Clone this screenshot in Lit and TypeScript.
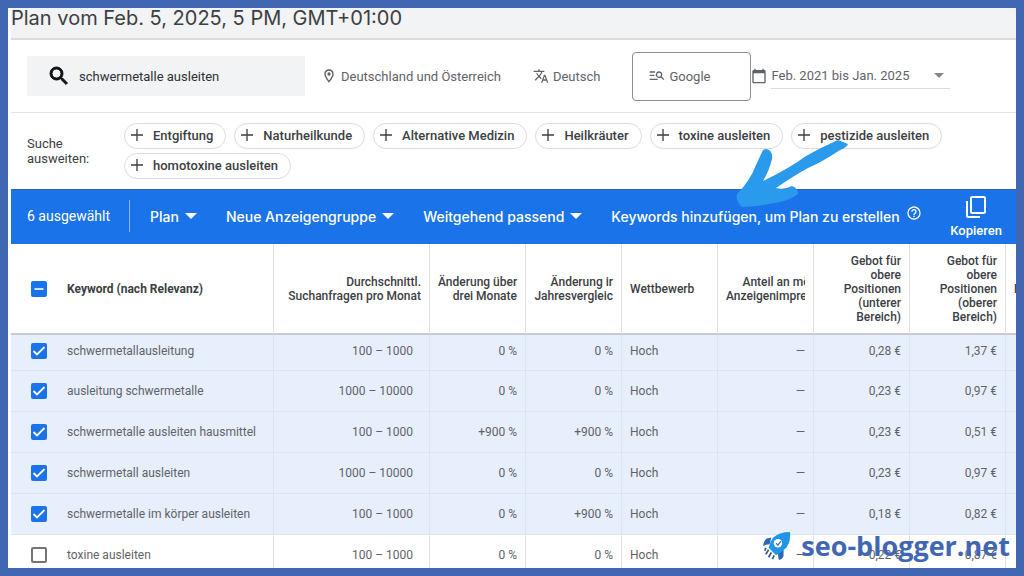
import { LitElement, html, css } from "lit";
import { customElement, state } from "lit/decorators.js";

interface Row {
  keyword: string;
  volume: string;
  quarter: string;
  year: string;
  low: string;
  high: string;
  checked: boolean;
}

const icon = (d: string) =>
  html`<svg class="icon" viewBox="0 0 24 24" aria-hidden="true"><path d=${d}></path></svg>`;

const PATHS = {
  search:
    "M15.5 14h-.79l-.28-.27A6.47 6.47 0 0 0 16 9.5 6.5 6.5 0 1 0 9.5 16c1.61 0 3.09-.59 4.23-1.57l.27.28v.79l5 4.99L20.49 19l-4.99-5zm-6 0C7.01 14 5 11.99 5 9.5S7.01 5 9.5 5 14 7.01 14 9.5 11.99 14 9.5 14z",
  place:
    "M12 2C8.13 2 5 5.13 5 9c0 5.25 7 13 7 13s7-7.75 7-13c0-3.87-3.13-7-7-7zM7 9c0-2.76 2.24-5 5-5s5 2.24 5 5c0 2.88-2.88 7.19-5 9.88C9.92 16.21 7 11.85 7 9zM12 6.5a2.5 2.5 0 1 0 0 5 2.5 2.5 0 0 0 0-5z",
  translate:
    "M12.87 15.07l-2.54-2.51.03-.03A17.52 17.52 0 0 0 14.07 6H17V4h-7V2H8v2H1v1.99h11.17C11.5 7.92 10.44 9.75 9 11.35 8.07 10.32 7.3 9.19 6.69 8h-2c.73 1.63 1.73 3.17 2.98 4.56l-5.09 5.02L4 19l5-5 3.11 3.11.76-2.04zM18.5 10h-2L12 22h2l1.12-3h4.75L21 22h2l-4.5-12zm-2.62 7l1.62-4.33L19.12 17h-3.24z",
  network:
    "M1 5h8v2H1V5zm0 5h7v2H1v-2zm0 6h12v2H1v-2zM15 5a5 5 0 1 0 2.7 9.2L21.6 18.1 23 16.700l-3.9-3.9A5 5 0 0 0 15 5zm0 2a3 3 0 1 1 0 6 3 3 0 0 1 0-6z",
  calendar:
    "M20 3h-1V1h-2v2H7V1H5v2H4c-1.1 0-2 .9-2 2v16c0 1.1.9 2 2 2h16c1.1 0 2-.9 2-2V5c0-1.1-.9-2-2-2zm0 18H4V8h16v13z",
  plus: "M21 13h-8v8h-2v-8H3v-2h8V3h2v8h8z",
  help:
    "M11 18h2v-2h-2v2zm1-16a10 10 0 1 0 0 20 10 10 0 0 0 0-20zm0 18c-4.41 0-8-3.59-8-8s3.59-8 8-8 8 3.59 8 8-3.59 8-8 8zm0-14a4 4 0 0 0-4 4h2c0-1.1.9-2 2-2s2 .9 2 2c0 2-3 1.75-3 5h2c0-2.25 3-2.5 3-5a4 4 0 0 0-4-4z",
  copy:
    "M16 21H4V6H2v15c0 1.1.9 2 2 2h12v-2zM20 1H8c-1.1 0-2 .9-2 2v14c0 1.1.9 2 2 2h12c1.1 0 2-.9 2-2V3c0-1.1-.9-2-2-2zm0 16H8V3h12v14z",
};

@customElement("app-root")
export class AppRoot extends LitElement {
  static styles = css`
    :host {
      display: block;
      font-family: Roboto, "Liberation Sans", sans-serif;
      font-size: 13px;
      color: #3c4043;
      position: relative;
    }
    * {
      box-sizing: border-box;
    }
    .frame {
      height: 100vh;
      border: 8px solid #4267b2;
      background: #fff;
      padding-left: 3px;
      overflow: hidden;
    }
    button {
      font: inherit;
      color: inherit;
      background: none;
      border: 0;
      padding: 0;
      display: inline-flex;
      align-items: center;
      white-space: nowrap;
      cursor: pointer;
    }
    .icon {
      width: 16px;
      height: 16px;
      fill: currentColor;
      flex: none;
    }
    .title {
      height: 32px;
      background: #f1f3f4;
      border-bottom: 2px solid #dadce0;
    }
    h1 {
      margin: 0;
      font: 400 20px/20px Inter, sans-serif;
      white-space: nowrap;
    }
    .filters {
      height: 73px;
      display: flex;
      align-items: center;
      border-bottom: 1px solid #e3e5e8;
      padding: 0 16px;
      color: #5f6368;
    }
    .search {
      display: flex;
      align-items: center;
      width: 278px;
      height: 40px;
      padding-left: 20px;
      gap: 8px;
      background: #f1f3f4;
      color: #111;
    }
    .search .icon {
      width: 24px;
      height: 24px;
      stroke: currentColor;
    }
    .search input {
      flex: 1;
      min-width: 0;
      border: 0;
      background: none;
      padding: 0;
      font: inherit;
      color: #303134;
      outline: none;
    }
    .filters button {
      gap: 4px;
    }
    .place {
      margin-left: 16px;
    }
    .lang {
      margin-left: 32px;
    }
    .filters .net {
      width: 119px;
      height: 49px;
      margin-left: 32px;
      padding-left: 16px;
      border: 1px solid #8a8d91;
      border-radius: 4px;
    }
    .range {
      display: flex;
      align-items: center;
      justify-content: space-between;
      width: 179px;
      height: 26px;
      border-bottom: 1px solid #dadce0;
      padding-right: 6px;
    }
    .caret {
      border: 6px solid transparent;
      border-top-color: currentColor;
      border-bottom: 0;
    }
    .range .caret {
      border-width: 5px;
      border-bottom: 0;
      color: #85888c;
    }
    .expand {
      min-height: 76px;
      display: flex;
      padding: 10px 16px;
      gap: 16px;
    }
    .label {
      width: 81px;
      padding-top: 13px;
      line-height: 15px;
    }
    .chips {
      flex: 1;
      display: flex;
      flex-wrap: wrap;
      align-content: flex-start;
      gap: 4px 8px;
    }
    .chips button {
      height: 26px;
      border: 1px solid #dadce0;
      border-radius: 13px;
      padding: 0 12px 2px 4px;
      gap: 8px;
      font-weight: 500;
    }
    .bar {
      height: 55px;
      display: flex;
      align-items: center;
      background: #1a73e8;
      border-top: 1px solid #3461a8;
      color: #fff;
      font-size: 14px;
      padding: 0 14px 2px 16px;
      white-space: nowrap;
    }
    .count {
      height: 32px;
      line-height: 32px;
      padding-right: 19px;
      margin-right: 20px;
      border-right: 1px solid #8ab8f3;
    }
    .bar button {
      gap: 6px;
      margin-right: 29px;
      font-family: Inter, sans-serif;
      font-weight: 500;
    }
    .bar .add {
      margin-right: 6px;
    }
    .bar .help {
      margin: 0 auto 6px 0;
    }
    .bar .copy {
      flex-direction: column;
      gap: 4px;
      margin: 0;
      font-family: inherit;
      font-size: 13px;
      line-height: 15px;
    }
    .copy .icon {
      width: 24px;
      height: 24px;
    }
    table {
      width: 100%;
      table-layout: fixed;
      border-collapse: separate;
      border-spacing: 0;
      color: #5f6368;
      font-size: 12px;
    }
    .c-check {
      width: 56px;
    }
    .c-vol {
      width: 156px;
    }
    .c-num {
      width: 96px;
    }
    .c-more {
      width: 10px;
    }
    th,
    td {
      padding: 0 8px;
      height: 41px;
      text-align: right;
      border-right: 1px solid #dfe3ea;
      border-bottom: 1px solid #dfe3ea;
      white-space: nowrap;
      overflow: hidden;
    }
    th {
      height: 91px;
      font-weight: 500;
      line-height: 14px;
      color: #3c4043;
      border-bottom: 2px solid #c8cacd;
    }
    tbody tr:first-child td {
      height: 36px;
      padding-bottom: 4px;
    }
    th.left,
    td.left {
      text-align: left;
    }
    th.check,
    td.check {
      padding: 0 0 0 20px;
      border-right: 0;
    }
    th.kw,
    td.kw {
      text-align: left;
      padding-left: 0;
    }
    th.kw {
      font-weight: 700;
    }
    td.vol {
      padding-right: 16px;
    }
    tr.on td {
      background: #e8effc;
    }
    td.edge,
    th.edge {
      border-right: 0;
      padding-right: 0;
    }
    .cut {
      overflow: hidden;
    }
    .over {
      display: block;
      margin-right: -5px;
    }
    input[type="checkbox"] {
      appearance: none;
      display: block;
      width: 16px;
      height: 16px;
      margin: 0;
      border: 2px solid #757575;
      border-radius: 2px;
      background: #fff center / 16px 16px no-repeat;
    }
    input[type="checkbox"]:checked,
    input[type="checkbox"]:indeterminate {
      border: 0;
      background-color: #1a73e8;
    }
    input[type="checkbox"]:checked {
      background-image: url("data:image/svg+xml,%3Csvg xmlns='http://www.w3.org/2000/svg' viewBox='0 0 16 16'%3E%3Cpath d='M2.5 8l3.5 3.5L13.5 4' fill='none' stroke='white' stroke-width='1.8'/%3E%3C/svg%3E");
    }
    input[type="checkbox"]:indeterminate {
      background-image: url("data:image/svg+xml,%3Csvg xmlns='http://www.w3.org/2000/svg' viewBox='0 0 16 16'%3E%3Cpath d='M3.5 8h9' stroke='white' stroke-width='1.6'/%3E%3C/svg%3E");
    }
    .arrow {
      position: absolute;
      left: 735px;
      top: 138px;
      width: 114px;
      height: 70px;
      pointer-events: none;
    }
    .brand {
      position: absolute;
      right: 14px;
      bottom: 10px;
      display: flex;
      align-items: center;
      gap: 10px;
      font: 700 27px/40px "Open Sans", sans-serif;
      color: #4267b2;
    }
    .brand svg {
      width: 28px;
      height: 30px;
    }
  `;

  @state() private rows: Row[] = [
    { keyword: "schwermetallausleitung", volume: "100 – 1000", quarter: "0 %", year: "0 %", low: "0,28 €", high: "1,37 €", checked: true },
    { keyword: "ausleitung schwermetalle", volume: "1000 – 10000", quarter: "0 %", year: "0 %", low: "0,23 €", high: "0,97 €", checked: true },
    { keyword: "schwermetalle ausleiten hausmittel", volume: "100 – 1000", quarter: "+900 %", year: "+900 %", low: "0,23 €", high: "0,51 €", checked: true },
    { keyword: "schwermetall ausleiten", volume: "1000 – 10000", quarter: "0 %", year: "0 %", low: "0,23 €", high: "0,97 €", checked: true },
    { keyword: "schwermetalle im körper ausleiten", volume: "100 – 1000", quarter: "0 %", year: "+900 %", low: "0,18 €", high: "0,82 €", checked: true },
    { keyword: "toxine ausleiten", volume: "100 – 1000", quarter: "0 %", year: "0 %", low: "0,22 €", high: "0,87 €", checked: false },
  ];

  private suggestions = [
    "Entgiftung",
    "Naturheilkunde",
    "Alternative Medizin",
    "Heilkräuter",
    "toxine ausleiten",
    "pestizide ausleiten",
    "homotoxine ausleiten",
  ];

  private toggle(index: number) {
    this.rows = this.rows.map((r, i) => (i === index ? { ...r, checked: !r.checked } : r));
  }

  render() {
    return html`
      <main class="frame">
        <header class="title"><h1>Plan vom Feb. 5, 2025, 5 PM, GMT+01:00</h1></header>
        <section class="filters">
          <label class="search">
            ${icon(PATHS.search)}
            <input type="text" aria-label="Keywords" .value=${"schwermetalle ausleiten"} />
          </label>
          <button class="place">${icon(PATHS.place)}Deutschland und Österreich</button>
          <button class="lang">${icon(PATHS.translate)}Deutsch</button>
          <button class="net">${icon(PATHS.network)}Google</button>
          <button class="date">
            ${icon(PATHS.calendar)}
            <span class="range">Feb. 2021 bis Jan. 2025<span class="caret"></span></span>
          </button>
        </section>
        <section class="expand">
          <div class="label">Suche<br />ausweiten:</div>
          <div class="chips">
            ${this.suggestions.map((s) => html`<button>${icon(PATHS.plus)}${s}</button>`)}
          </div>
        </section>
        <section class="bar">
          <span class="count">6 ausgewählt</span>
          <button>Plan<span class="caret"></span></button>
          <button>Neue Anzeigengruppe<span class="caret"></span></button>
          <button>Weitgehend passend<span class="caret"></span></button>
          <button class="add">Keywords hinzufügen, um Plan zu erstellen</button>
          <button class="help" aria-label="Hilfe">${icon(PATHS.help)}</button>
          <button class="copy">${icon(PATHS.copy)}Kopieren</button>
        </section>
        <table>
          <colgroup>
            <col class="c-check" />
            <col />
            <col class="c-vol" />
            <col class="c-num" span="6" />
            <col class="c-more" />
          </colgroup>
          <thead>
            <tr>
              <th class="check"><input type="checkbox" aria-label="Alle auswählen" .indeterminate=${true} /></th>
              <th class="kw">Keyword (nach Relevanz)</th>
              <th>Durchschnittl.<br />Suchanfragen pro Monat</th>
              <th>Änderung über<br />drei Monate</th>
              <th>Änderung ir<br />Jahresvergleic</th>
              <th class="left">Wettbewerb</th>
              <th><div class="cut"><span class="over">Anteil an mö</span>Anzeigenimpre</div></th>
              <th>Gebot für<br />obere<br />Positionen<br />(unterer<br />Bereich)</th>
              <th>Gebot für<br />obere<br />Positionen<br />(oberer<br />Bereich)</th>
              <th class="edge left">K</th>
            </tr>
          </thead>
          <tbody>
            ${this.rows.map(
              (r, i) => html`<tr class=${r.checked ? "on" : ""}>
                <td class="check">
                  <input type="checkbox" aria-label=${r.keyword} .checked=${r.checked} @change=${() => this.toggle(i)} />
                </td>
                <td class="kw">${r.keyword}</td>
                <td class="vol">${r.volume}</td>
                <td>${r.quarter}</td>
                <td>${r.year}</td>
                <td class="left">Hoch</td>
                <td>—</td>
                <td>${r.low}</td>
                <td>${r.high}</td>
                <td class="edge"></td>
              </tr>`
            )}
          </tbody>
        </table>
      </main>
      <svg class="arrow" viewBox="735 138 114 70" aria-hidden="true">
        <path
          fill="#2a9aec"
          d="M762 152Q764 147 769 150Q773 153 772 159Q769 171 763 181Q790 168 806 156Q822 147 838 140L848 144Q846 148 840 150Q822 162 808 168Q795 175 776 188Q784 190 792 186Q798 188 798 194Q793 198 784 201Q765 206 742 207Q735 200 737 194Q750 181 756 165z"
        ></path>
      </svg>
      <div class="brand">
        <svg viewBox="0 0 30 32" aria-hidden="true">
          <path fill="#2f67b1" d="M9 7L4 8Q1 10 0 16Q3 14 7 14zM22 20L22 27Q21 30 17 31Q16 27 16 23z"></path>
          <path fill="#2196e8" d="M29 1Q17 1 11 7Q7 12 6 18L14 26Q21 22 25 18Q30 11 29 1z"></path>
          <circle cx="16" cy="13" r="4.5" fill="#fff"></circle>
          <path d="M14 13l2 2 3-4" fill="none" stroke="#2f67b1" stroke-width="1.3"></path>
          <path d="M3 18l-1 3M6 20l-3 5M9 23l-3 5M12 26l-2 4" stroke="#31548c" stroke-width="1.8"></path>
        </svg>
        <span>seo-blogger.net</span>
      </div>
    `;
  }
}
